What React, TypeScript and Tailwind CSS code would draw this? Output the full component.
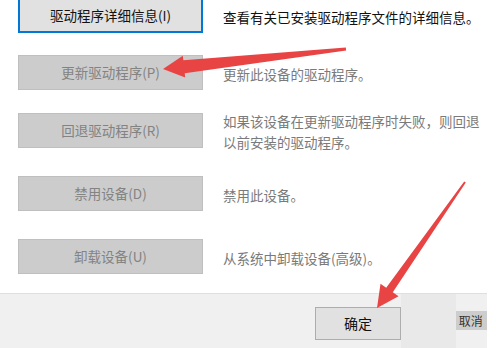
import React from "react";

const FONT = { fontFamily: '"Noto Sans CJK SC", "Noto Sans", sans-serif' };

type Row = {
  label: string;
  desc: string[];
  enabled?: boolean;
  mt: string;
};

const rows: Row[] = [
  { label: "驱动程序详细信息(I)", desc: ["查看有关已安装驱动程序文件的详细信息。"], enabled: true, mt: "mt-[-2px]" },
  { label: "更新驱动程序(P)", desc: ["更新此设备的驱动程序。"], mt: "mt-[22px]" },
  {
    label: "回退驱动程序(R)",
    desc: ["如果该设备在更新驱动程序时失败，则回退", "以前安装的驱动程序。"],
    mt: "mt-[23px]",
  },
  { label: "禁用设备(D)", desc: ["禁用此设备。"], mt: "mt-[28px]" },
  { label: "卸载设备(U)", desc: ["从系统中卸载设备(高级)。"], mt: "mt-[28px]" },
];

function DriverRow({ row }: { row: Row }) {
  return (
    <div className={`flex items-center h-[35px] ${row.mt}`}>
      <button
        type="button"
        className={
          row.enabled
            ? "ml-[18px] w-[185px] h-[35px] shrink-0 border-2 border-[#0078d7] bg-[#e1e1e1] text-[13.5px] text-[#111]"
            : "ml-[18px] w-[185px] h-[35px] shrink-0 border border-[#bfbfbf] bg-[#cccccc] text-[13.5px] text-[#838383]"
        }
      >
        {row.label}
      </button>
      <div
        className={`ml-[20px] pt-[3px] text-[13.5px] leading-[21px] whitespace-nowrap ${
          row.enabled ? "text-[#111]" : "text-[#7a7a7a]"
        }`}
      >
        {row.desc.map((line) => (
          <div key={line}>{line}</div>
        ))}
      </div>
    </div>
  );
}

function Arrows() {
  return (
    <svg className="absolute inset-0 pointer-events-none" width="496" height="348" viewBox="0 0 496 348">
      <polygon
        fill="#e84444"
        points="163,69 182.8,55.8 183.3,60.2 345.8,47.5 346.2,50.5 184.7,73.2 185.2,77.6"
      />
      <polygon
        fill="#e84444"
        points="377,308 380.5,283.7 386.2,287.7 464.2,181.4 465.8,182.6 392.8,292.3 398.5,296.3"
      />
    </svg>
  );
}

export default function App() {
  return (
    <div className="relative w-[496px] h-[348px] overflow-hidden bg-white flex" style={FONT}>
      <div className="w-[487px] flex flex-col shrink-0">
        <div className="h-[294px] overflow-hidden bg-white border-b border-[#dfdfdf]">
          {rows.map((r) => (
            <DriverRow key={r.label} row={r} />
          ))}
        </div>
        <div className="flex-1 bg-[#f0f0f0] flex items-start">
          <button
            type="button"
            className="ml-[315px] mt-[13px] w-[86px] h-[33px] border border-[#adadad] bg-[#e1e1e1] text-[14px] text-[#111]"
          >
            确定
          </button>
          <div className="w-[55px] self-stretch bg-[#e9e9e9]" />
          <div className="mt-[17px] w-[31px] h-[19px] bg-[#cdcdcd] overflow-hidden text-[12px] leading-[19px] text-[#333] whitespace-nowrap">
            &nbsp;取消
          </div>
        </div>
      </div>
      <div className="flex-1 bg-white" />
      <Arrows />
    </div>
  );
}
